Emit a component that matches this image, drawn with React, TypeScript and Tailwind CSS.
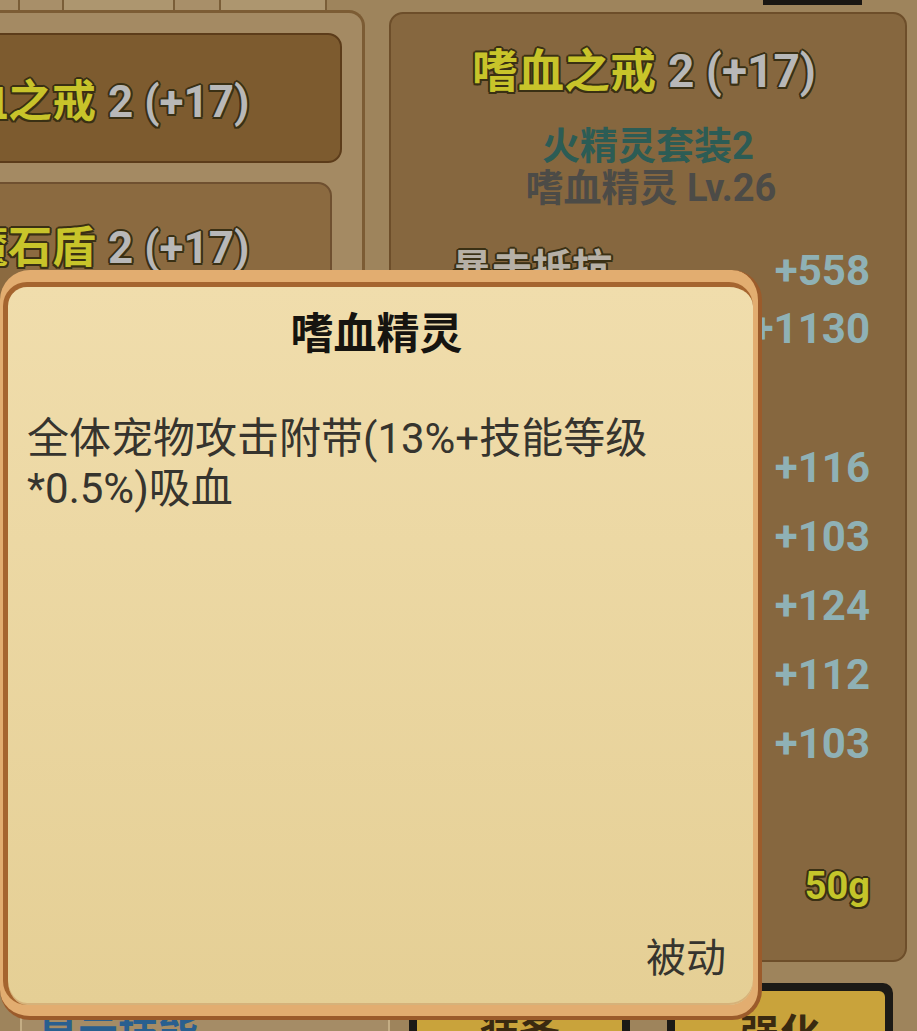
const darkOutline =
  "[text-shadow:2px_0_0_#3a3014,-2px_0_0_#3a3014,0_2px_0_#3a3014,0_-2px_0_#3a3014,1.5px_1.5px_0_#3a3014,-1.5px_-1.5px_0_#3a3014,1.5px_-1.5px_0_#3a3014,-1.5px_1.5px_0_#3a3014]";

function ItemName({ name }: { name: string }) {
  return (
    <div className={"flex items-baseline text-[44px] leading-[52px] font-bold " + darkOutline}>
      <span className="text-[#c8c42a]">{name}</span>
      <span className="ml-[12px] text-[#b8b8b8]">2 (+17)</span>
    </div>
  );
}

function LeftList() {
  return (
    <div className="w-[365px] h-full bg-[#a48a63] border-r-[3px] border-t-[3px] border-[#7c5c34] rounded-tr-[16px] pt-[20px]">
      <div className="-ml-[20px] w-[362px] h-[130px] bg-[#7d5b2f] border-2 border-[#5c3c1a] rounded-[14px] flex items-center overflow-hidden">
        <div className="-ml-[62px] mt-[8px]">
          <ItemName name="嗜血之戒" />
        </div>
      </div>
      <div className="-ml-[20px] mt-[19px] w-[352px] h-[130px] bg-[#8b6a40] border-2 border-[#6f5030] rounded-[14px] flex items-center overflow-hidden">
        <div className="-ml-[18px] mt-[2px]">
          <ItemName name="魔石盾" />
        </div>
      </div>
    </div>
  );
}

function StatRow({ label, value, h }: { label?: string; value: string; h: string }) {
  return (
    <div className={"flex items-center justify-between pl-[61px] pr-[35px] " + h}>
      <span className={"text-[40px] font-bold text-[#b6b0a6] " + darkOutline}>{label}</span>
      <span className="text-[42px] font-bold text-[#8fb1b5]">{value}</span>
    </div>
  );
}

function RightPanel() {
  return (
    <div className="ml-[24px] mt-[2px] w-[518px] h-[950px] bg-[#86673f] border-2 border-[#6d4e2a] rounded-[14px] flex flex-col">
      <div className={"pt-[31px] pr-[8px] flex justify-center items-baseline text-[46px] leading-[52px] font-bold " + darkOutline}>
        <span className="text-[#c8c42a]">嗜血之戒</span>
        <span className="ml-[12px] text-[#b8b8b8]">2 (+17)</span>
      </div>
      <div className="mt-[28px] text-center text-[38px] leading-[42px] font-bold text-[#2c5c55]">火精灵套装2</div>
      <div className="pl-[6px] text-center text-[38px] leading-[42px] font-bold text-[#4c4b47]">嗜血精灵 Lv.26</div>
      <div className="mt-[32px]">
        <StatRow label="暴击抵抗" value="+558" h="h-[58px]" />
        <StatRow value="+1130" h="h-[58px]" />
        <div className="h-[76px]" />
        <StatRow value="+116" h="h-[69px]" />
        <StatRow value="+103" h="h-[69px]" />
        <StatRow value="+124" h="h-[69px]" />
        <StatRow value="+112" h="h-[69px]" />
        <StatRow value="+103" h="h-[69px]" />
      </div>
      <div className={"mt-[88px] pr-[35px] text-right text-[38px] leading-[40px] font-bold text-[#c4c52a] " + darkOutline}>50g</div>
    </div>
  );
}

function BottomBar() {
  return (
    <div className="flex h-[48px]">
      <div className="ml-[20px] w-[370px] h-full bg-[#a58c66] border-x-2 border-[#c4ad84] pt-[30px] pl-[16px] text-[40px] leading-[44px] font-bold text-[#295f8f]">
        显示技能
      </div>
      <div className="ml-[19px] w-[221px] h-full bg-[#1c1a16] rounded-t-[10px] pt-[8px] px-[8px]">
        <div className="h-full bg-[#c9a33b] rounded-t-[6px] pt-[22px] text-center text-[40px] leading-[44px] font-bold text-[#3a2a10]">装备</div>
      </div>
      <div className="ml-[37px] w-[226px] h-full bg-[#1c1a16] rounded-t-[10px] pt-[8px] px-[8px]">
        <div className="h-full bg-[#c9a33b] rounded-t-[6px] pt-[22px] text-center text-[40px] leading-[44px] font-bold text-[#3a2a10]">强化</div>
      </div>
    </div>
  );
}

function Popup() {
  return (
    <div className="absolute left-0 top-[270px] w-[762px] h-[750px] rounded-[30px] bg-[#e2ad70] border-r-[4px] border-b-[4px] border-[#9b5b2b] pt-[12px] pl-[3px] pr-[5px] pb-[11px]">
      <div className="h-full rounded-[24px] border-t-[5px] border-l-[5px] border-[#a5652f] bg-linear-to-b from-[#f0ddac] to-[#e5cf95] shadow-[inset_0_-2px_0_#d6b27a] flex flex-col pt-[22px] pl-[19px] pr-[27px] pb-[21px]">
        <div className="text-center text-[43px] leading-[50px] font-bold text-[#161410]">嗜血精灵</div>
        <div className="mt-[55px] text-[42px] leading-[50px] text-[#36342e]">
          全体宠物攻击附带(13%+技能等级
          <br />
          *0.5%)吸血
        </div>
        <div className="mt-auto text-right text-[40px] leading-[50px] text-[#36342e]">被动</div>
      </div>
    </div>
  );
}

export default function App() {
  return (
    <div className="relative w-[917px] h-[1031px] overflow-hidden bg-[#9e845c] font-['Roboto','Noto_Sans_CJK_SC',sans-serif]">
      <div className="flex h-[10px]">
        <div className="w-[20px] bg-[#a88f69] border-r-2 border-[#7a5e38]" />
        <div className="w-[44px] bg-[#a88f69] border-r-2 border-[#7a5e38]" />
        <div className="w-[111px] bg-[#ad966f] border-r-2 border-[#7a5e38]" />
        <div className="w-[46px] bg-[#a88f69] border-r-2 border-[#7a5e38]" />
        <div className="w-[106px] bg-[#ad966f] border-r-2 border-[#7a5e38]" />
        <div className="ml-[436px] w-[99px] h-[5px] bg-[#1a1612]" />
      </div>
      <div className="flex h-[973px]">
        <LeftList />
        <RightPanel />
      </div>
      <BottomBar />
      <Popup />
    </div>
  );
}
